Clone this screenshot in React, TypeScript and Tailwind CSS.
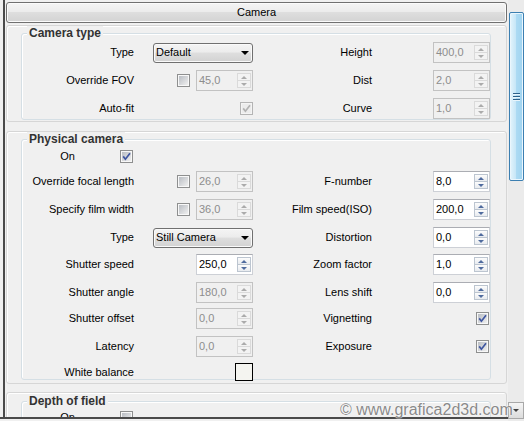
import React from 'react'

function Up({ off }: { off?: boolean }) {
  return <div className={`w-0 h-0 border-x-[3px] border-x-transparent border-b-[3px] ${off ? 'border-b-[#ababab]' : 'border-b-[#4f6b9e]'}`} />
}
function Down({ off }: { off?: boolean }) {
  return <div className={`w-0 h-0 border-x-[3px] border-x-transparent border-t-[3px] ${off ? 'border-t-[#ababab]' : 'border-t-[#4f6b9e]'}`} />
}

function Spin({ v, off = false }: { v: string; off?: boolean }) {
  const btn = off
    ? 'border-[#dadada] bg-[#f3f3f3]'
    : 'border-[#bcc5d0] bg-gradient-to-b from-[#fcfcfc] to-[#e8ebef]'
  return (
    <div
      className={`w-[57px] h-[21px] border flex items-center ${
        off ? 'border-[#c2c2c2] bg-[#f0f0f0] text-[#8d8d8d]' : 'border-[#cdd0d6] border-t-[#abadb3] bg-white text-black'
      }`}
    >
      <span className="flex-1 pl-[2px]">{v}</span>
      <div className="w-[14px] h-[15px] mr-[1px] flex flex-col">
        <div className={`h-[8px] border flex items-center justify-center ${btn}`}>
          <Up off={off} />
        </div>
        <div className={`h-[7px] border border-t-0 flex items-center justify-center ${btn}`}>
          <Down off={off} />
        </div>
      </div>
    </div>
  )
}

function Check({ on = false, off = false }: { on?: boolean; off?: boolean }) {
  return (
    <div
      className={`relative w-[13px] h-[13px] border p-[1px] ${
        off ? 'border-[#b4b4b4] bg-[#f4f4f4]' : 'border-[#8e8f8f] bg-[#f8f8f8]'
      }`}
    >
      <div className={`w-full h-full ${off ? 'bg-[#ececec]' : 'bg-gradient-to-br from-[#b9bdc3] to-[#f0f0f0]'}`} />
      {on && (
        <svg className="absolute left-0 top-0" width="11" height="11" viewBox="0 0 11 11">
          <path d="M2.2 5.4 L4.4 8.2 L9 2.2" fill="none" stroke={off ? '#b2b2b2' : '#3f56a0'} strokeWidth="1.7" />
        </svg>
      )}
    </div>
  )
}

function Combo({ v }: { v: string }) {
  return (
    <div className="w-[100px] h-[20px] rounded-[3px] border border-[#707070] bg-[linear-gradient(#f4f4f4,#ececec_45%,#dedede_50%,#d2d2d2)] shadow-[inset_0_0_0_1px_#fafafa] flex items-center pl-[2px] pr-[3px]">
      <span className="flex-1">{v}</span>
      <div className="w-0 h-0 border-x-[4px] border-x-transparent border-t-[4px] border-t-black" />
    </div>
  )
}

function Row({
  cls,
  label,
  left,
  rlabel,
  right,
}: {
  cls: string
  label: string
  left?: React.ReactNode
  rlabel?: string
  right?: React.ReactNode
}) {
  return (
    <div className={`flex items-center ${cls}`}>
      <div className="w-[112px] text-right whitespace-nowrap">{label}</div>
      <div className="ml-[19px] w-[100px] flex justify-end items-center gap-[6px]">{left}</div>
      <div className="w-[119px] text-right whitespace-nowrap">{rlabel}</div>
      <div className="ml-[61px] w-[57px] flex justify-end items-center">{right}</div>
    </div>
  )
}

function OnRow({ cls, on = false }: { cls: string; on?: boolean }) {
  return (
    <div className={`flex items-center h-[13px] ${cls}`}>
      <div className="w-[53px] text-right">On</div>
      <div className="ml-[45px]">
        <Check on={on} />
      </div>
    </div>
  )
}

function Group({ title, cls, children }: { title: string; cls: string; children: React.ReactNode }) {
  return (
    <div className={`relative border border-[#d5dfe5] rounded-[3px] shadow-[inset_1px_1px_0_#fff] ${cls}`}>
      <span className="absolute left-[5px] top-[-8px] px-[2px] bg-[#f0f0f0] font-bold text-[12px] leading-[14px] text-[#333]">
        {title}
      </span>
      {children}
    </div>
  )
}

function Panel({ cls, children }: { cls: string; children: React.ReactNode }) {
  return (
    <div className={`mx-[1px] shrink-0 rounded-[3px] border border-[#d6d6d6] shadow-[inset_1px_1px_0_#fff] pl-[14px] pr-[15px] ${cls}`}>
      {children}
    </div>
  )
}

function Scrollbar() {
  return (
    <div className="w-[16px] h-full bg-[#ebebeb] flex flex-col">
      <div className="h-[12px] shrink-0" />
      <div className="ml-[1px] h-[169px] shrink-0 rounded-[2px] border border-[#3c7fb1] bg-[linear-gradient(90deg,#e4f4fc,#c6e6f7_45%,#acdaf3_50%,#9fd3f0)] shadow-[inset_0_0_0_1px_#eaf6fd] flex flex-col items-center justify-center gap-[1px]">
        <div className="w-[7px] h-[2px] border-t border-t-[#2d618a] border-b border-b-[#e8f5fc]" />
        <div className="w-[7px] h-[2px] border-t border-t-[#2d618a] border-b border-b-[#e8f5fc]" />
        <div className="w-[7px] h-[2px] border-t border-t-[#2d618a] border-b border-b-[#e8f5fc]" />
      </div>
      <div className="flex-1" />
      <div className="h-[17px] mb-[2px] border border-[#a8a8a8] bg-gradient-to-b from-[#f5f5f5] to-[#dcdcdc] flex items-center justify-center">
        <div className="w-0 h-0 border-x-[3px] border-x-transparent border-t-[3px] border-t-[#404040]" />
      </div>
    </div>
  )
}

export default function App() {
  return (
    <div className="relative w-[524px] h-[421px] overflow-hidden bg-[#f0f0f0] flex font-['Liberation_Sans',Arial,sans-serif] text-[11px] text-black">
      <div className="w-[508px] h-[419px] pl-[3px] border-b-2 border-[#4a4a4a]">
        <div className="h-full border-l-2 border-[#4a4a4a] overflow-hidden flex flex-col">
          <div className="mx-[1px] mt-[2px] h-[21px] shrink-0 rounded-[3px] border border-[#707070] bg-[linear-gradient(#f4f4f4,#ececec_45%,#dedede_50%,#d3d3d3)] shadow-[inset_0_0_0_1px_#fbfbfb] flex items-center justify-center">
            Camera
          </div>

          <Panel cls="mt-[2px] h-[97px] pt-[7px]">
            <Group title="Camera type" cls="h-[87px] pt-[8px]">
              <Row cls="h-[21px]" label="Type" left={<Combo v="Default" />} rlabel="Height" right={<Spin v="400,0" off />} />
              <Row
                cls="h-[21px] mt-[7px]"
                label="Override FOV"
                left={
                  <>
                    <Check />
                    <Spin v="45,0" off />
                  </>
                }
                rlabel="Dist"
                right={<Spin v="2,0" off />}
              />
              <Row cls="h-[21px] mt-[7px]" label="Auto-fit" left={<Check on off />} rlabel="Curve" right={<Spin v="1,0" off />} />
            </Group>
          </Panel>

          <Panel cls="mt-[9px] h-[253px] pt-[7px]">
            <Group title="Physical camera" cls="h-[241px]">
              <OnRow cls="mt-[10px]" on />
              <Row
                cls="h-[21px] mt-[8px]"
                label="Override focal length"
                left={
                  <>
                    <Check />
                    <Spin v="26,0" off />
                  </>
                }
                rlabel="F-number"
                right={<Spin v="8,0" />}
              />
              <Row
                cls="h-[21px] mt-[7px]"
                label="Specify film width"
                left={
                  <>
                    <Check />
                    <Spin v="36,0" off />
                  </>
                }
                rlabel="Film speed(ISO)"
                right={<Spin v="200,0" />}
              />
              <Row cls="h-[21px] mt-[7px]" label="Type" left={<Combo v="Still Camera" />} rlabel="Distortion" right={<Spin v="0,0" />} />
              <Row cls="h-[21px] mt-[6px]" label="Shutter speed" left={<Spin v="250,0" />} rlabel="Zoom factor" right={<Spin v="1,0" />} />
              <Row cls="h-[21px] mt-[7px]" label="Shutter angle" left={<Spin v="180,0" off />} rlabel="Lens shift" right={<Spin v="0,0" />} />
              <Row
                cls="h-[21px] mt-[5px]"
                label="Shutter offset"
                left={<Spin v="0,0" off />}
                rlabel="Vignetting"
                right={
                  <div className="mr-[1px]">
                    <Check on />
                  </div>
                }
              />
              <Row
                cls="h-[21px] mt-[7px]"
                label="Latency"
                left={<Spin v="0,0" off />}
                rlabel="Exposure"
                right={
                  <div className="mr-[1px]">
                    <Check on />
                  </div>
                }
              />
              <Row
                cls="h-[18px] mt-[6px]"
                label="White balance"
                left={<div className="w-[18px] h-[18px] border border-black bg-[#f4f4f0]" />}
              />
            </Group>
          </Panel>

          <Panel cls="mt-[8px] h-[60px] pt-[8px]">
            <Group title="Depth of field" cls="h-[50px]">
              <OnRow cls="mt-[9px]" />
            </Group>
          </Panel>
        </div>
      </div>
      <Scrollbar />

      <div className="absolute left-[340px] top-[401px] text-[16px] leading-[18px] text-[#8a8a8a] whitespace-nowrap [text-shadow:0_0_1px_#fff,0_0_2px_#fff]">
        © www.grafica2d3d.com
      </div>
    </div>
  )
}
